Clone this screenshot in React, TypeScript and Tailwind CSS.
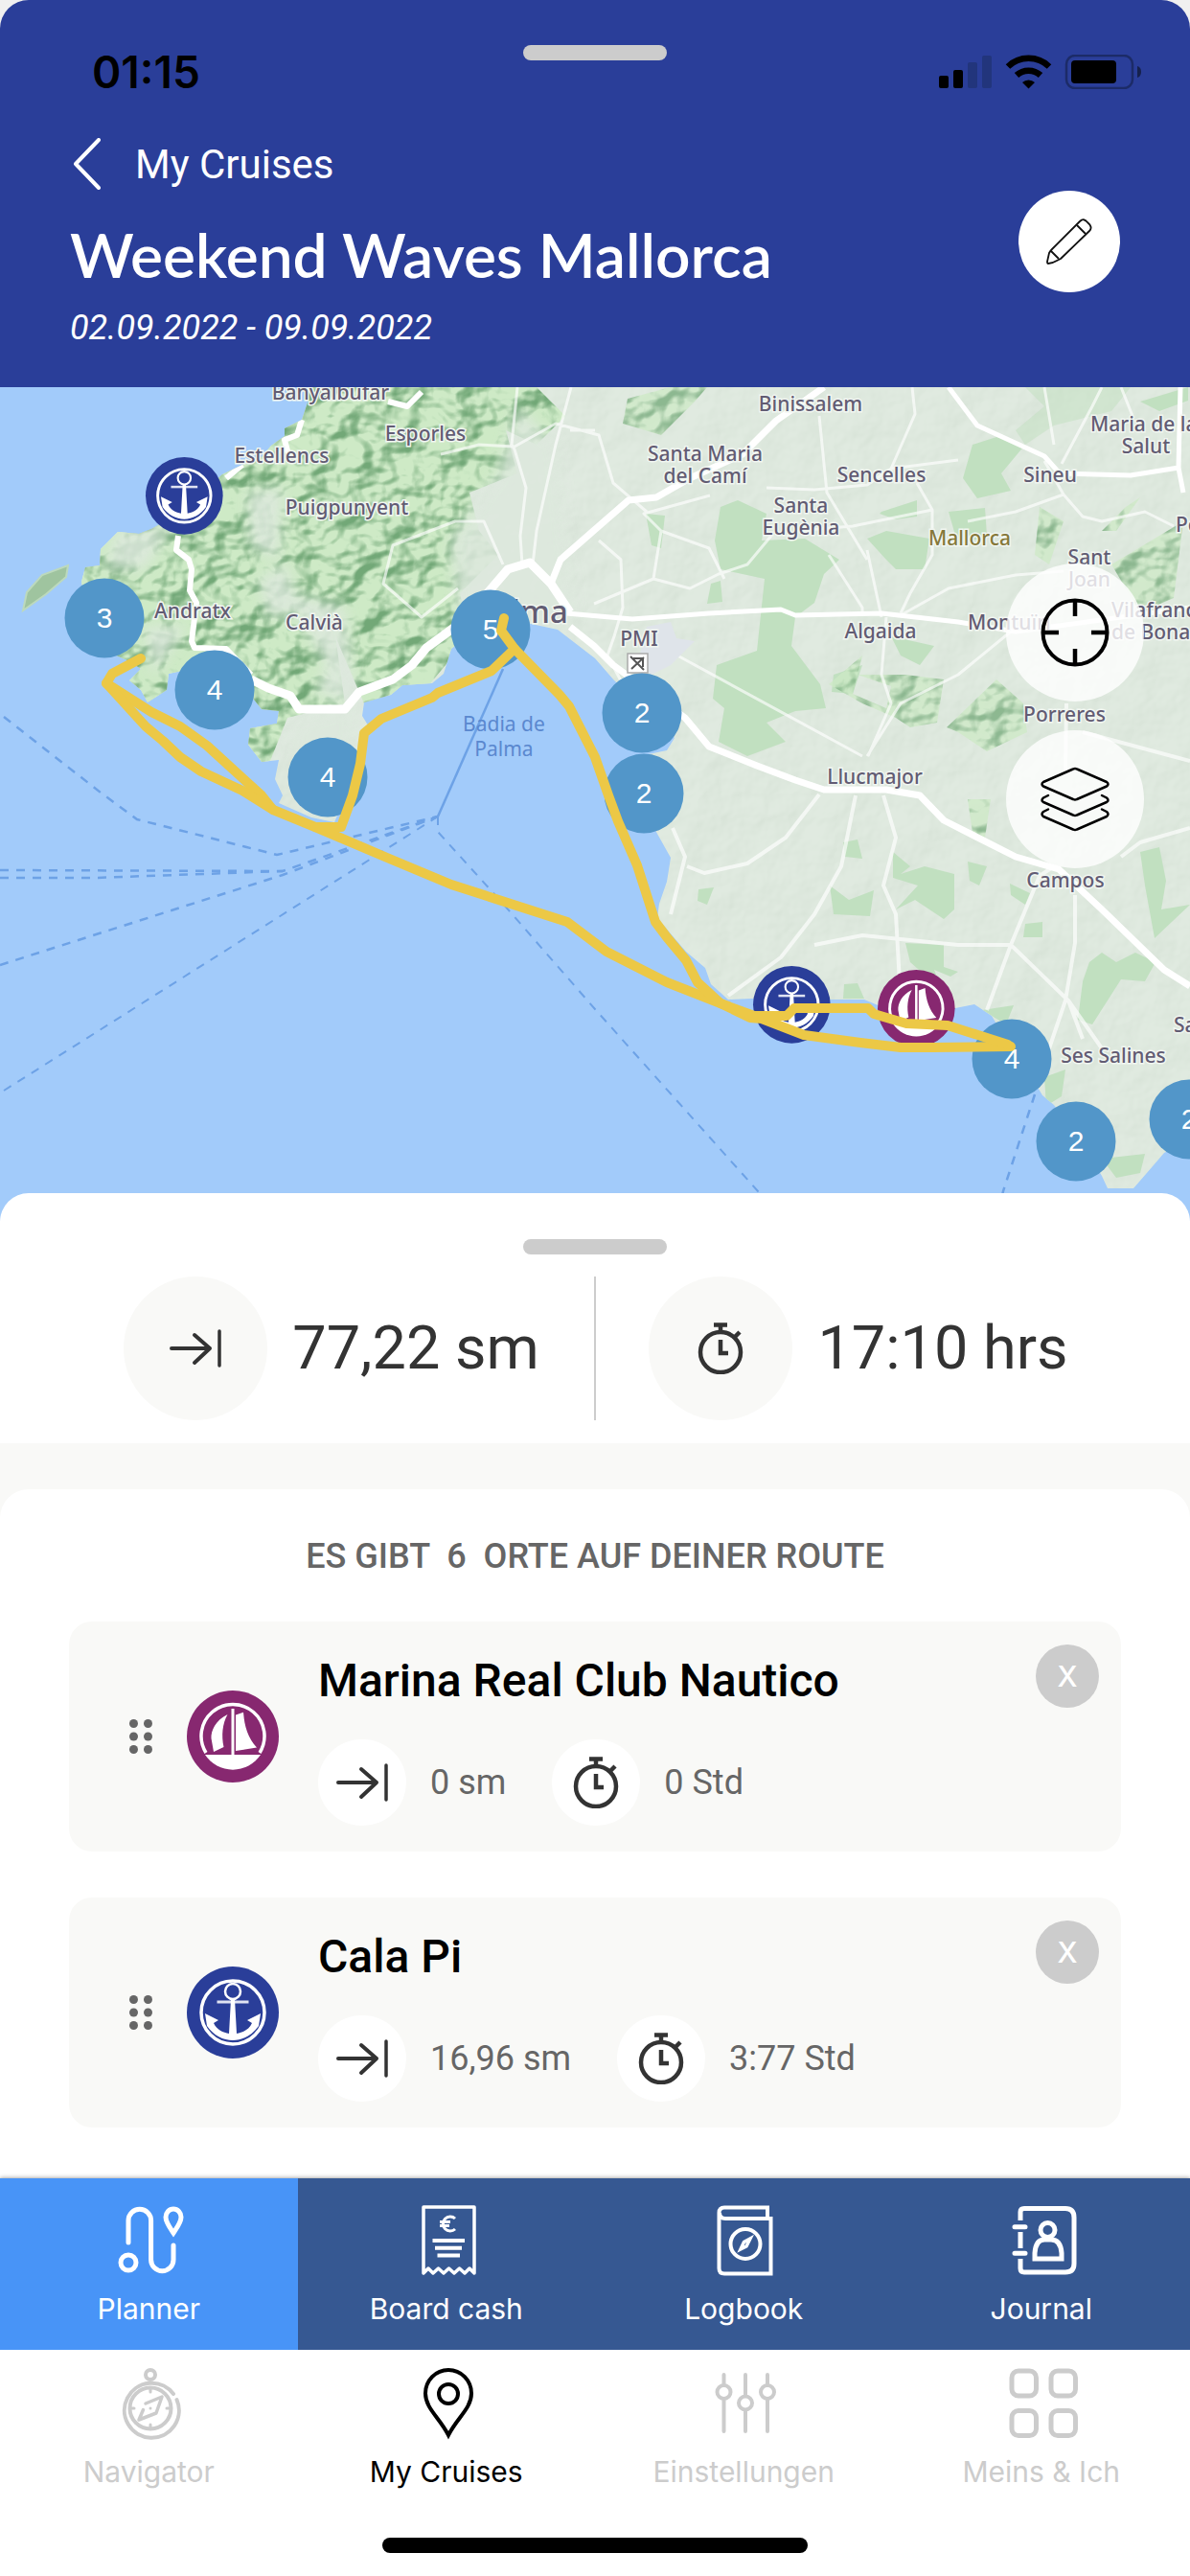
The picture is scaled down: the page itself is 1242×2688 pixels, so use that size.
import React from 'react';

interface Stop {
  name: string;
  kind: 'marina' | 'anchorage';
  distance: string;
  duration: string;
}

interface NavItem {
  label: string;
  icon: React.ReactNode;
  active?: boolean;
}

interface MapLabel {
  text: string;
  x: number;
  y: number;
  anchor?: 'start' | 'middle' | 'end';
}

const stops: Stop[] = [
  { name: 'Marina Real Club Nautico', kind: 'marina', distance: '0 sm', duration: '0 Std' },
  { name: 'Cala Pi', kind: 'anchorage', distance: '16,96 sm', duration: '3:77 Std' },
];

const clusters = [
  { x: 109, y: 241, count: 3 },
  { x: 224, y: 316, count: 4 },
  { x: 512, y: 253, count: 5 },
  { x: 342, y: 407, count: 4 },
  { x: 670, y: 340, count: 2 },
  { x: 672, y: 424, count: 2 },
  { x: 1056, y: 701, count: 4 },
  { x: 1123, y: 787, count: 2 },
  { x: 1241, y: 764, count: 2 },
];

const mapLabels: MapLabel[] = [
  { text: 'Banyalbufar', x: 345, y: 13 },
  { text: 'Esporles', x: 444, y: 56 },
  { text: 'Estellencs', x: 294, y: 79 },
  { text: 'Puigpunyent', x: 362, y: 133 },
  { text: 'Andratx', x: 201, y: 241 },
  { text: 'Calvià', x: 328, y: 253 },
  { text: 'Binissalem', x: 846, y: 25 },
  { text: 'Maria de la', x: 1138, y: 46, anchor: 'start' },
  { text: 'Salut', x: 1196, y: 69 },
  { text: 'Santa Maria', x: 736, y: 77 },
  { text: 'del Camí', x: 736, y: 100 },
  { text: 'Sencelles', x: 920, y: 99 },
  { text: 'Sineu', x: 1096, y: 99 },
  { text: 'Santa', x: 836, y: 131 },
  { text: 'Eugènia', x: 836, y: 154 },
  { text: 'Petra', x: 1227, y: 151, anchor: 'start' },
  { text: 'Sant', x: 1137, y: 185 },
  { text: 'Joan', x: 1137, y: 208 },
  { text: 'Vilafranca', x: 1160, y: 240, anchor: 'start' },
  { text: 'de Bonany', x: 1160, y: 263, anchor: 'start' },
  { text: 'Montuïri', x: 1010, y: 253, anchor: 'start' },
  { text: 'Algaida', x: 919, y: 262 },
  { text: 'PMI', x: 667, y: 270 },
  { text: 'Porreres', x: 1111, y: 349 },
  { text: 'Llucmajor', x: 913, y: 414 },
  { text: 'Campos', x: 1112, y: 522 },
  { text: 'Ses Salines', x: 1162, y: 705 },
  { text: 'Santanyí', x: 1225, y: 673, anchor: 'start' },
];

const COAST =
  'M321 0L321 16L315 34L297 43L297 51L283 61L270 76L253 81L232 91L218 104L190 130L158 148L145 153L123 151L105 169L104 186L89 188L85 203L92 240L119 279L135 286L147 294L135 306L147 316L154 329L174 316L176 299L190 296L215 330L257 316L273 336L291 338L289 351L261 356L259 373L273 391L291 389L287 409L295 426L291 434L325 449L349 454L352 447L374 383L386 356L378 343L380 329L408 321L420 311L451 309L463 299L471 273L500 250L550 246L582 253L621 283L641 306L690 350L704 366L696 379L672 384L672 440L686 466L700 491L696 516L688 539L686 554L716 589L736 606L742 623L760 639L785 638L819 643L867 639L902 639L926 649L997 648L1017 644L1035 656L1041 666L1065 700L1088 739L1100 749L1130 790L1150 823L1156 836L1183 836L1203 813L1215 799L1242 786V0Z';

const MarinaGlyph: React.FC = () => (
  <>
    <circle cx="48" cy="48" r="48" fill="#872870" />
    <path d="M20 65A33 33 0 1 1 76 65" fill="none" stroke="#fff" strokeWidth="3.5" />
    <path d="M19 67H77A34.7 34.7 0 0 1 19 67Z" fill="#fff" />
    <path d="M46.5 19H49.5V68H46.5Z" fill="#fff" />
    <path d="M42.5 25C30 31 25 42 25.5 50L28 64L38.5 59C36 47 37 35 42.5 25Z" fill="#fff" />
    <path d="M51 25.5L59 22.7C60 37 64 50 73 59.5L51 63Z" fill="#fff" />
  </>
);

const AnchorGlyph: React.FC = () => (
  <>
    <circle cx="48" cy="48" r="48" fill="#2a3e99" />
    <circle cx="48" cy="48" r="33" fill="none" stroke="#fff" strokeWidth="3.5" />
    <circle cx="48" cy="26" r="8" fill="none" stroke="#fff" strokeWidth="2.5" />
    <path d="M31.5 37H64.5" stroke="#dfe2f2" strokeWidth="3" />
    <path
      d="M46 34H50L52 70C58 69 65 66 68 59L63 56L77 49L75 62C68 72 58 77 48 77C38 77 28 72 21 62L19 49L33 56L28 59C31 66 38 69 44 70Z"
      fill="#fff"
    />
  </>
);

const ArrowToLineIcon: React.FC = () => (
  <svg className="w-[54px] h-10" viewBox="0 0 54 40" fill="none" stroke="#333" strokeWidth="4" strokeLinecap="round" strokeLinejoin="round" aria-hidden="true">
    <path d="M2 20H42M26 6L42 20L26 35" />
    <path d="M52 2V38" strokeWidth="3.5" />
  </svg>
);

const StopwatchIcon: React.FC = () => (
  <svg className="w-12 h-[54px]" viewBox="0 0 48 54" fill="none" stroke="#333" strokeWidth="4.5" aria-hidden="true">
    <circle cx="24" cy="31" r="21" />
    <path d="M17 2.5H31M24 2V10M39 15L44 10M24 18V32H32" />
  </svg>
);

const StatusBar: React.FC = () => (
  <div className="grid grid-cols-3 items-center h-14 px-12">
    <span className="pl-12 font-['Inter',sans-serif] font-semibold text-[46px] leading-[56px] text-black">01:15</span>
    <div className="justify-self-center self-start w-[150px] h-4 rounded-full bg-[#ccc]"></div>
    <svg className="justify-self-end w-[214px] h-9" viewBox="0 0 214 36" aria-hidden="true">
      <rect x="0" y="22" width="10" height="13" rx="2" />
      <rect x="15" y="16" width="10" height="19" rx="2" />
      <rect x="30" y="8" width="10" height="27" rx="2" fill="#22357c" />
      <rect x="45" y="1" width="10" height="34" rx="2" fill="#22357c" />
      <g fill="none" stroke="#000" strokeWidth="6.5">
        <path d="M72 12.5A31 31 0 0 1 115 12.5" />
        <path d="M81 21.5A18.5 18.5 0 0 1 106 21.5" />
      </g>
      <path d="M87 29A9.5 9.5 0 0 1 100 29L93.5 35.5Z" />
      <rect x="133" y="1" width="69" height="34" rx="9" fill="none" stroke="#1c2b68" strokeWidth="2.5" />
      <rect x="138" y="6" width="47" height="24" rx="4" />
      <path d="M207 12Q211 13 211 18T207 24Z" fill="#16214d" />
    </svg>
  </div>
);

const Header: React.FC = () => (
  <header className="rounded-t-[30px] bg-[#2a3e99] pt-[47px] pb-[38px] text-white">
    <StatusBar />
    <div className="mt-[41px] px-[73px] flex items-start justify-between">
      <div>
        <a href="#cruises" className="flex items-center h-[54px] gap-9 text-[42px]">
          <svg className="w-8 h-[54px]" viewBox="0 0 32 54" fill="none" stroke="currentColor" strokeWidth="4" strokeLinecap="round" strokeLinejoin="round" aria-hidden="true">
            <path d="M30 2L6 27L30 52" />
          </svg>
          My Cruises
        </a>
        <h1 className="mt-8 font-['Lato',sans-serif] font-semibold text-[64px] leading-[72px]">Weekend Waves Mallorca</h1>
        <p className="mt-4 italic text-[36px] leading-[48px]">02.09.2022 - 09.09.2022</p>
      </div>
      <button type="button" aria-label="Edit cruise" className="mt-[55px] flex items-center justify-center w-[106px] h-[106px] rounded-full bg-white">
        <svg className="w-12 h-12" viewBox="0 0 48 48" fill="none" stroke="#111" strokeWidth="1.8" strokeLinejoin="round" aria-hidden="true">
          <path d="M1 45L3 36Q4 34 6 32L35 3Q39 -1 43 4Q49 9 45 13L15 42Q13 43 11 44Q6 47 2 47Q1 47 1 45Z" />
          <path d="M32 7L41 16M5 34L13 42" />
        </svg>
      </button>
    </div>
  </header>
);

const CruiseMap: React.FC = () => (
  <section aria-label="Map" className="relative h-[870px] overflow-hidden bg-[#a2cbfa]">
    <svg className="w-full h-full" viewBox="0 0 1242 870" preserveAspectRatio="xMidYMin slice" fontFamily="'Noto Sans', sans-serif">
      <defs>
        {/* Shaded relief: lit noise squeezed into a narrow range of greens */}
        <filter id="hills" x="0" y="0" width="100%" height="100%" colorInterpolationFilters="sRGB">
          <feTurbulence type="fractalNoise" baseFrequency="0.026 0.032" numOctaves="3" seed="8" result="noise" />
          <feDiffuseLighting in="noise" surfaceScale="22" diffuseConstant="1.15" lightingColor="#fff" result="light">
            <feDistantLight azimuth="225" elevation="52" />
          </feDiffuseLighting>
          <feComponentTransfer in="light" result="tinted">
            <feFuncR type="linear" slope="0.36" intercept="0.45" />
            <feFuncG type="linear" slope="0.26" intercept="0.66" />
            <feFuncB type="linear" slope="0.31" intercept="0.47" />
          </feComponentTransfer>
          <feComposite in="tinted" in2="SourceAlpha" operator="in" />
        </filter>
        <filter id="plain" x="0" y="0" width="100%" height="100%" colorInterpolationFilters="sRGB">
          <feTurbulence type="fractalNoise" baseFrequency="0.02" numOctaves="4" seed="3" result="noise" />
          <feDiffuseLighting in="noise" surfaceScale="3" diffuseConstant="1.15" lightingColor="#fff" result="light">
            <feDistantLight azimuth="225" elevation="55" />
          </feDiffuseLighting>
          <feComponentTransfer in="light" result="tinted">
            <feFuncR type="linear" slope="0.14" intercept="0.74" />
            <feFuncG type="linear" slope="0.12" intercept="0.8" />
            <feFuncB type="linear" slope="0.14" intercept="0.74" />
          </feComponentTransfer>
          <feComposite in="tinted" in2="SourceAlpha" operator="in" />
        </filter>
        <filter id="soft">
          <feGaussianBlur stdDeviation="7" />
        </filter>
        <clipPath id="land">
          <path d={COAST} />
        </clipPath>
      </defs>

      {/* Terrain */}
      <path d={COAST} fill="#dde8dd" filter="url(#plain)" />
      <g clipPath="url(#land)">
        <path d="M60 0H560L590 30L560 60L528 45L540 90L490 110L500 150L520 175L480 215L490 260L440 320L380 330L350 260L360 330L300 345L250 470L60 400Z" fill="#fff" filter="url(#hills)" />
        <g fill="#dde8dd" opacity="0.85" filter="url(#soft)">
          <path d="M540 20L580 60L600 240L480 250L470 160L520 90Z" />
          <path d="M300 215L340 290L330 320L370 330L360 230Z" />
          <path d="M120 150L180 145L150 190L110 190Z" />
          <path d="M258 110L295 105L290 180L262 165Z" />
          <path d="M270 200L300 185L310 235L280 240Z" />
          <path d="M150 250L195 250L160 300Z" />
          <path d="M310 350L372 330L365 380L300 385Z" />
        </g>
        <g fill="#c1e0c0">
          <path d="M752 125L770 118L800 132L795 160L840 158L876 180L860 195L850 225L830 240L826 270L856 310L862 335L830 338L800 350L820 370L780 385L750 370L756 335L744 325L748 290L790 275L798 200L752 190L746 160Z" />
          <path d="M674 132L694 134L690 168L680 165Z" />
          <path d="M742 205L752 202L754 224L738 226Z" />
          <path d="M920 130L957 118V135L935 138L918 132Z" />
          <path d="M905 158L925 150L970 158L965 190L935 190L925 180Z" />
          <path d="M1015 60L1040 52L1070 60L1045 90L1055 108L1020 116L1005 95Z" />
          <path d="M990 130L1028 126L1030 155L1000 165Z" />
          <path d="M1190 15L1240 0V14L1210 25Z" />
          <path d="M870 300L900 290L890 320L868 318Z" />
          <path d="M930 260L975 270L960 290L940 280Z" />
          <path d="M1160 25L1180 0H1070L1090 20L1060 45L1070 60L1100 40Z" opacity="0.5" />
          <path d="M880 475L895 472L900 492L882 490Z" />
          <path d="M932 485L950 500L940 508L965 500L996 508V545L985 555L955 535L935 545L958 520L932 512Z" />
          <path d="M866 520L886 535L912 525L908 552L870 550Z" />
          <path d="M945 580L985 582L985 605L1000 610L992 615L975 608L984 630L950 600Z" />
          <path d="M1010 495L1030 500L1022 520L1012 515Z" />
          <path d="M1054 518L1075 528L1070 540L1055 530Z" />
          <path d="M1070 560L1088 558V574H1068Z" />
          <path d="M1190 485L1210 480L1217 515L1212 545L1242 540L1205 575L1195 520Z" />
          <path d="M1137 600L1150 590L1165 600L1185 590L1206 600L1195 620L1170 618L1140 665L1125 660L1130 620Z" />
          <path d="M1090 720L1112 712L1108 740L1092 750Z" />
          <path d="M881 623L895 622L902 638H880Z" />
          <path d="M1150 805L1195 800L1190 820L1165 825Z" />
          <path d="M1025 650L1058 645L1050 665Z" />
          <path d="M729 524L745 522L738 540L728 536Z" />
        </g>
        <g fill="#fff" filter="url(#hills)" opacity="0.75">
          <path d="M655 12L700 0H738L725 15L690 50L650 38Z" />
          <path d="M865 310L900 280L890 320L925 335L930 312L895 300L945 300L985 305L978 350L950 355L935 345L900 330Z" />
          <path d="M988 355L1040 305L1068 330L1072 360L1030 380L1000 360Z" />
          <path d="M1085 125L1110 140L1095 185L1080 175Z" />
          <path d="M1160 185L1235 140L1225 220L1190 235Z" />
          <path d="M1175 125L1190 115L1165 150L1150 150Z" />
          <path d="M1010 430L1034 430L1028 470L1015 465Z" />
        </g>
      </g>
      <path d="M71 186L69 198L48 216L24 233L28 214L44 196Z" fill="#9fc49f" stroke="#bcd9bd" strokeWidth="2" />

      {/* Roads */}
      <g clipPath="url(#land)" fill="none" stroke="#fff" strokeLinejoin="round">
        <path d="M540 0L534 60L537 65L549 105L543 155L545 185M596 0L580 60L560 150L556 185M537 62L500 60L460 70M537 62L580 38L625 50L640 100L675 130M595 45H621M478 210L440 240L400 205L410 165L475 140L505 140L525 185M625 160L648 180L650 230L641 260L634 280L650 310M741 113L672 132L690 150L740 168L756 200M682 200L720 210L750 195L780 185L805 155M682 200L620 226M682 200L690 150M855 30L863 110L905 180M952 0L955 28L930 85L905 102L850 107L800 105M930 85L1000 76M957 100L973 128V175L950 215L940 236M973 128L890 145L830 150M1090 77L1110 112L1130 135L1150 140L1195 130L1225 145M1110 112L1060 130L1010 140M1108 80L1140 20L1150 0M940 238L990 210L1060 196L1110 192M905 170L920 240M865 175L900 230V236M1090 0L1100 60M1170 0L1182 30M1055 255L1000 300L940 330L905 385M707 280L900 385M906 385L930 330L920 300L925 240" strokeWidth="3" opacity="0.65" />
        <path d="M702 460L715 490L700 550M717 500L735 507L780 497L820 470L855 425M893 426L878 500L850 550L815 595L760 635M922 426L935 470L922 520L935 550L940 640M850 582L900 572L940 576L1000 582L1055 582L1115 640L1150 690M1055 582L1085 510L1100 500M1055 582L1030 650M1122 530V580L1112 640L1095 690M1115 640L1130 680M1242 460L1190 475L1170 490M1130 360L1242 390M1112 400L1113 330" strokeWidth="4" opacity="0.65" />
        <path d="M315 34L310 50L297 55L301 70M253 81L236 95M186 155L184 170L197 180L200 190L198 212L205 225L200 265L203 272L236 273L262 300M440 5L425 20L405 15" strokeWidth="6" />
        <path d="M262 305L280 314L303 322L312 336L360 336L375 318L410 305L430 290L445 272L475 250L500 225L530 190L553 183L575 205L595 235" strokeWidth="9" />
        <path d="M575 205L585 180L625 145L656 118L685 115L720 95L775 70L810 35L860 0M595 250L620 270L640 290L715 345L740 375L790 395L830 410L860 420H925L960 426L985 452L1060 490L1105 503L1150 545L1215 608L1242 625" strokeWidth="7" />
        <path d="M591 236L660 242L740 236L815 232L830 238L920 236L1000 245L1060 255L1120 247L1242 230M990 0L1020 40L1090 72L1106 90L1180 92L1230 84L1235 110M1232 0L1230 84" strokeWidth="5" />
      </g>
      <path d="M675 250L700 245L706 262L725 265L700 290L680 300L665 290Z" fill="#dfe4ea" />
      <rect x="655" y="278" width="21" height="20" fill="#fff" stroke="#aaa" strokeWidth="1.5" />
      <path d="M658 281L672 295M672 282L659 294M661 283H671V292" stroke="#555" strokeWidth="2" fill="none" />

      {/* Ferry lines */}
      <g fill="none" stroke="#6da2e6" strokeWidth="2.5" strokeDasharray="9 8">
        <path d="M4 344L105 423L143 451L289 488L457 448" />
        <path d="M0 504L295 505L457 448" />
        <path d="M0 512H99L295 505" />
        <path d="M0 603L295 509L457 448" />
        <path d="M4 734L457 448" strokeWidth="2" />
        <path d="M457 448V464L525 539L621 649L791 839L815 870" strokeWidth="2" />
        <path d="M1080 738L1047 839L1040 870" />
        <path d="M457 448L525 294" strokeDasharray="none" />
      </g>

      {/* Place names */}
      <g fill="#625c73" stroke="#f1f6f1" strokeWidth="3" paintOrder="stroke" fontSize="21" fontWeight="500">
        {mapLabels.map((label) => (
          <text key={label.text + label.y} x={label.x} y={label.y} textAnchor={label.anchor ?? 'middle'}>
            {label.text}
          </text>
        ))}
        <text x="593" y="246" textAnchor="end" fontSize="33">Palma</text>
        <text x="1012" y="165" textAnchor="middle" fill="#85783a">Mallorca</text>
      </g>
      <g fill="#5a88cf" fontSize="21" textAnchor="middle">
        <text x="526" y="359">Badia de</text>
        <text x="526" y="385">Palma</text>
      </g>

      {/* Markers */}
      {clusters.map((cluster) => (
        <g key={`${cluster.x}-${cluster.y}`}>
          <circle cx={cluster.x} cy={cluster.y} r="41.5" fill="#5296c9" />
          <text x={cluster.x} y={cluster.y + 10} textAnchor="middle" fontSize="30" fill="#fff" fontFamily="'Liberation Sans', sans-serif">
            {cluster.count}
          </text>
        </g>
      ))}
      <g transform="translate(152 73) scale(0.84)"><AnchorGlyph /></g>
      <g transform="translate(786 604) scale(0.84)"><AnchorGlyph /></g>
      <g transform="translate(916 608) scale(0.84)"><MarinaGlyph /></g>

      {/* Planned route */}
      <g fill="none" stroke="#ecc846" strokeWidth="10" strokeLinecap="round" strokeLinejoin="round">
        <path d="M147 283L117 299L111 309L158 339L188 354L216 374L273 426L285 441" />
        <path d="M111 309L152 354L170 369L188 386L210 401L253 421L285 441L329 459L404 491L471 519L592 558L633 589L696 621L752 643L783 658L795 659L839 676L898 684L940 689H973L1055 688" />
        <path d="M329 459H356L368 426L376 393L380 361L398 346L451 324L457 319L513 296L537 273L523 254L526 241" />
        <path d="M537 273L584 321L594 333L621 386L635 426L645 453L665 499L684 558L696 574L716 598L728 621L752 643L787 656L821 656L829 648H906L912 654L946 664L989 666L1052 686" />
      </g>
    </svg>

    <div className="absolute right-12 top-[184px] flex flex-col gap-[30px]">
      <button type="button" aria-label="Center map" className="flex items-center justify-center w-36 h-36 rounded-full bg-white/80">
        <svg className="w-[72px] h-[72px]" viewBox="0 0 72 72" fill="none" stroke="#000" strokeWidth="4" aria-hidden="true">
          <circle cx="36" cy="36" r="33.5" />
          <path d="M36 2V19M36 53V70M2 36H19M53 36H70" strokeWidth="4.5" />
        </svg>
      </button>
      <button type="button" aria-label="Map layers" className="flex items-center justify-center w-36 h-36 rounded-full bg-white/80">
        <svg className="w-[72px] h-[68px]" viewBox="0 0 72 68" fill="none" stroke="#000" strokeWidth="2.5" strokeLinejoin="round" strokeLinecap="round" aria-hidden="true">
          <path d="M34 2.5Q36 1.5 38 2.5L69 16Q72 18 69 20.5L38 34Q36 35 34 34L3 20.5Q0 18 3 16Z" />
          <path d="M8 30L3 32.5Q0 35 3 37L34 50.5Q36 51.5 38 50.5L69 37Q72 35 69 32.5L64 30" />
          <path d="M8 44.5L3 47Q0 49.5 3 52L34 65.5Q36 66.5 38 65.5L69 52Q72 49.5 69 47L64 44.5" />
        </svg>
      </button>
    </div>
  </section>
);

const Summary: React.FC = () => (
  <section className="relative -mt-[29px] rounded-t-[30px] bg-white pt-12 pb-6 px-[72px]">
    <div className="mx-auto w-[150px] h-4 rounded-full bg-[#ccc]"></div>
    <div className="mt-[23px] flex text-[63px] text-[#333]">
      <div className="flex-1 flex items-center justify-center gap-[26px] border-r-2 border-[#ccc]">
        <div className="flex items-center justify-center w-[150px] h-[150px] rounded-full bg-[#f9f9f7]">
          <ArrowToLineIcon />
        </div>
        77,22 sm
      </div>
      <div className="flex-1 flex items-center justify-center gap-[26px]">
        <div className="flex items-center justify-center w-[150px] h-[150px] rounded-full bg-[#f9f9f7]">
          <StopwatchIcon />
        </div>
        17:10 hrs
      </div>
    </div>
  </section>
);

const StopCard: React.FC<{ stop: Stop }> = ({ stop }) => (
  <li className="flex items-center rounded-[24px] bg-[#f9f9f7] pl-[63px] pr-[23px]">
    <svg className="w-6 h-9 shrink-0" viewBox="0 0 24 36" fill="#666" aria-hidden="true">
      <circle cx="4.5" cy="4.5" r="4.5" />
      <circle cx="19.5" cy="4.5" r="4.5" />
      <circle cx="4.5" cy="18" r="4.5" />
      <circle cx="19.5" cy="18" r="4.5" />
      <circle cx="4.5" cy="31.5" r="4.5" />
      <circle cx="19.5" cy="31.5" r="4.5" />
    </svg>
    <svg className="ml-9 w-24 h-24 shrink-0" viewBox="0 0 96 96" aria-hidden="true">
      {stop.kind === 'marina' ? <MarinaGlyph /> : <AnchorGlyph />}
    </svg>
    <div className="flex-1 ml-[41px] pt-[34px] pb-[27px]">
      <h3 className="text-[48px] leading-[56px] font-medium text-black">{stop.name}</h3>
      <div className="mt-[33px] flex items-center text-[36px] text-[#666]">
        <span className="flex items-center justify-center w-[92px] h-[90px] rounded-full bg-white"><ArrowToLineIcon /></span>
        <span className="ml-[25px]">{stop.distance}</span>
        <span className="ml-12 flex items-center justify-center w-[92px] h-[90px] rounded-full bg-white"><StopwatchIcon /></span>
        <span className="ml-[25px]">{stop.duration}</span>
      </div>
    </div>
    <button type="button" aria-label={`Remove ${stop.name}`} className="self-start mt-6 flex items-center justify-center w-[66px] h-[66px] rounded-full bg-[#ccc] text-white text-[30px] font-medium font-['Inter',sans-serif]">
      X
    </button>
  </li>
);

const iconProps = {
  viewBox: '0 0 72 72',
  fill: 'none',
  stroke: 'currentColor',
  strokeWidth: 4,
  className: 'w-[72px] h-[72px] overflow-visible',
  'aria-hidden': true,
};

const cruiseTabs: NavItem[] = [
  {
    label: 'Planner',
    active: true,
    icon: (
      <svg {...iconProps} strokeWidth={5} strokeLinecap="round">
        <circle cx="15" cy="60" r="8" />
        <path d="M15 39V16a11.8 11.8 0 0 1 23.6 0V57a11.7 11.7 0 0 0 23.4 0V42" />
        <path d="M62 29C58 23 54 18 54 12.5a8 8.5 0 0 1 16 0C70 18 66 23 62 29Z" />
      </svg>
    ),
  },
  {
    label: 'Board cash',
    icon: (
      <svg {...iconProps} strokeLinejoin="round">
        <path d="M12 71V2H65V71L60 66L55 71L49.5 66L44 71L38.5 66L33 71L27.5 66L22 71L17 66Z" strokeWidth="3.5" />
        <path d="M45 14a7.5 7.5 0 1 0 0 11M29 17.5H40M29 21.5H39" strokeWidth="3" />
        <path d="M21.5 37H55M24 44.7H52M26.5 52.5H50" />
      </svg>
    ),
  },
  {
    label: 'Logbook',
    icon: (
      <svg {...iconProps}>
        <path d="M61 14V2.5H16Q10.5 2.5 10.5 8V66Q10.5 71.5 16 71.5H64.5V14H17Q11 14 11 8" />
        <circle cx="38" cy="40.5" r="15.5" />
        <path d="M43 35L39 43L33 46L36.5 38.5Z" strokeWidth="3.5" />
      </svg>
    ),
  },
  {
    label: 'Journal',
    icon: (
      <svg {...iconProps} strokeWidth={5}>
        <path d="M14 16V7Q14 3.5 18 3.5H61Q70 3.5 70 13V61Q70 70 61 70H18Q14 70 14 66V56M14 28V45" />
        <path d="M8 22.7H19M8 50.3H19" strokeLinecap="round" />
        <circle cx="42.5" cy="26" r="7.5" />
        <path d="M29 56V50Q30 36 39 36H46Q56 36 57 50V56Z" />
      </svg>
    ),
  },
];

const mainTabs: NavItem[] = [
  {
    label: 'Navigator',
    icon: (
      <svg {...iconProps} strokeLinecap="round">
        <circle cx="38" cy="7" r="5" />
        <path d="M62 27A28.5 28.5 0 1 0 65.5 33" />
        <circle cx="38" cy="42" r="21.5" />
        <path d="M38 22V25M38 59V62M18 42H21M55 42H58M38 42V42.1" strokeWidth="3" />
        <path d="M33 37L50 30L44 47L26 54L30.5 43.5" strokeWidth="3.5" strokeLinejoin="round" />
      </svg>
    ),
  },
  {
    label: 'My Cruises',
    active: true,
    icon: (
      <svg {...iconProps}>
        <path d="M38 70C29 52 14 42 14 26.5A24 24.5 0 0 1 62 26.5C62 42 47 52 38 70Z" />
        <circle cx="38" cy="27" r="10" />
      </svg>
    ),
  },
  {
    label: 'Einstellungen',
    icon: (
      <svg {...iconProps} strokeLinecap="round">
        <circle cx="15.5" cy="25" r="7" />
        <circle cx="38" cy="36.5" r="7" />
        <circle cx="61" cy="25" r="7" />
        <path d="M15.5 7V18M15.5 32V66M38 7V29M38 44V66M61 7V18M61 32V66" />
      </svg>
    ),
  },
  {
    label: 'Meins & Ich',
    icon: (
      <svg {...iconProps} strokeWidth={5}>
        <rect x="5" y="3" width="25.5" height="26" rx="7" />
        <rect x="46" y="3" width="25.5" height="26" rx="7" />
        <rect x="5" y="44.5" width="25.5" height="26" rx="7" />
        <rect x="46" y="44.5" width="25.5" height="26" rx="7" />
      </svg>
    ),
  },
];

const App: React.FC = () => {
  return (
    <div className="min-h-screen flex flex-col bg-[#f0f0f0] font-['Roboto',sans-serif]">
      <Header />
      <CruiseMap />
      <Summary />

      <main className="flex-1 bg-[#f9f9f7] pt-12">
        <div className="h-full rounded-t-[30px] bg-white px-[72px] pt-[46px] pb-[52px]">
          <h2 className="text-center whitespace-pre text-[36px] leading-[48px] font-medium text-[#666]">{'ES GIBT  6  ORTE AUF DEINER ROUTE'}</h2>
          <ul className="mt-11 flex flex-col gap-12">
            {stops.map((stop) => (
              <StopCard key={stop.name} stop={stop} />
            ))}
          </ul>
        </div>
      </main>

      <nav aria-label="Cruise" className="grid grid-cols-4 bg-[#365892] text-white text-[30px] leading-10 font-['Inter',sans-serif] shadow-[0_-1px_4px_rgba(0,0,0,0.3)]">
        {cruiseTabs.map((tab) => (
          <button key={tab.label} type="button" className={`flex flex-col items-center gap-4 pt-7 pb-[23px] ${tab.active ? 'bg-[#4894f7]' : ''}`}>
            {tab.icon}
            {tab.label}
          </button>
        ))}
      </nav>

      <footer className="bg-white pb-6">
        <nav aria-label="Main" className="grid grid-cols-4 text-[30px] leading-10 font-['Inter',sans-serif]">
          {mainTabs.map((tab) => (
            <button key={tab.label} type="button" className={`flex flex-col items-center gap-4 pt-[19px] ${tab.active ? 'text-black' : 'text-[#ccc]'}`}>
              {tab.icon}
              {tab.label}
            </button>
          ))}
        </nav>
        <div className="mx-auto mt-[49px] w-[444px] h-4 rounded-full bg-black"></div>
      </footer>
    </div>
  );
};

export default App;
